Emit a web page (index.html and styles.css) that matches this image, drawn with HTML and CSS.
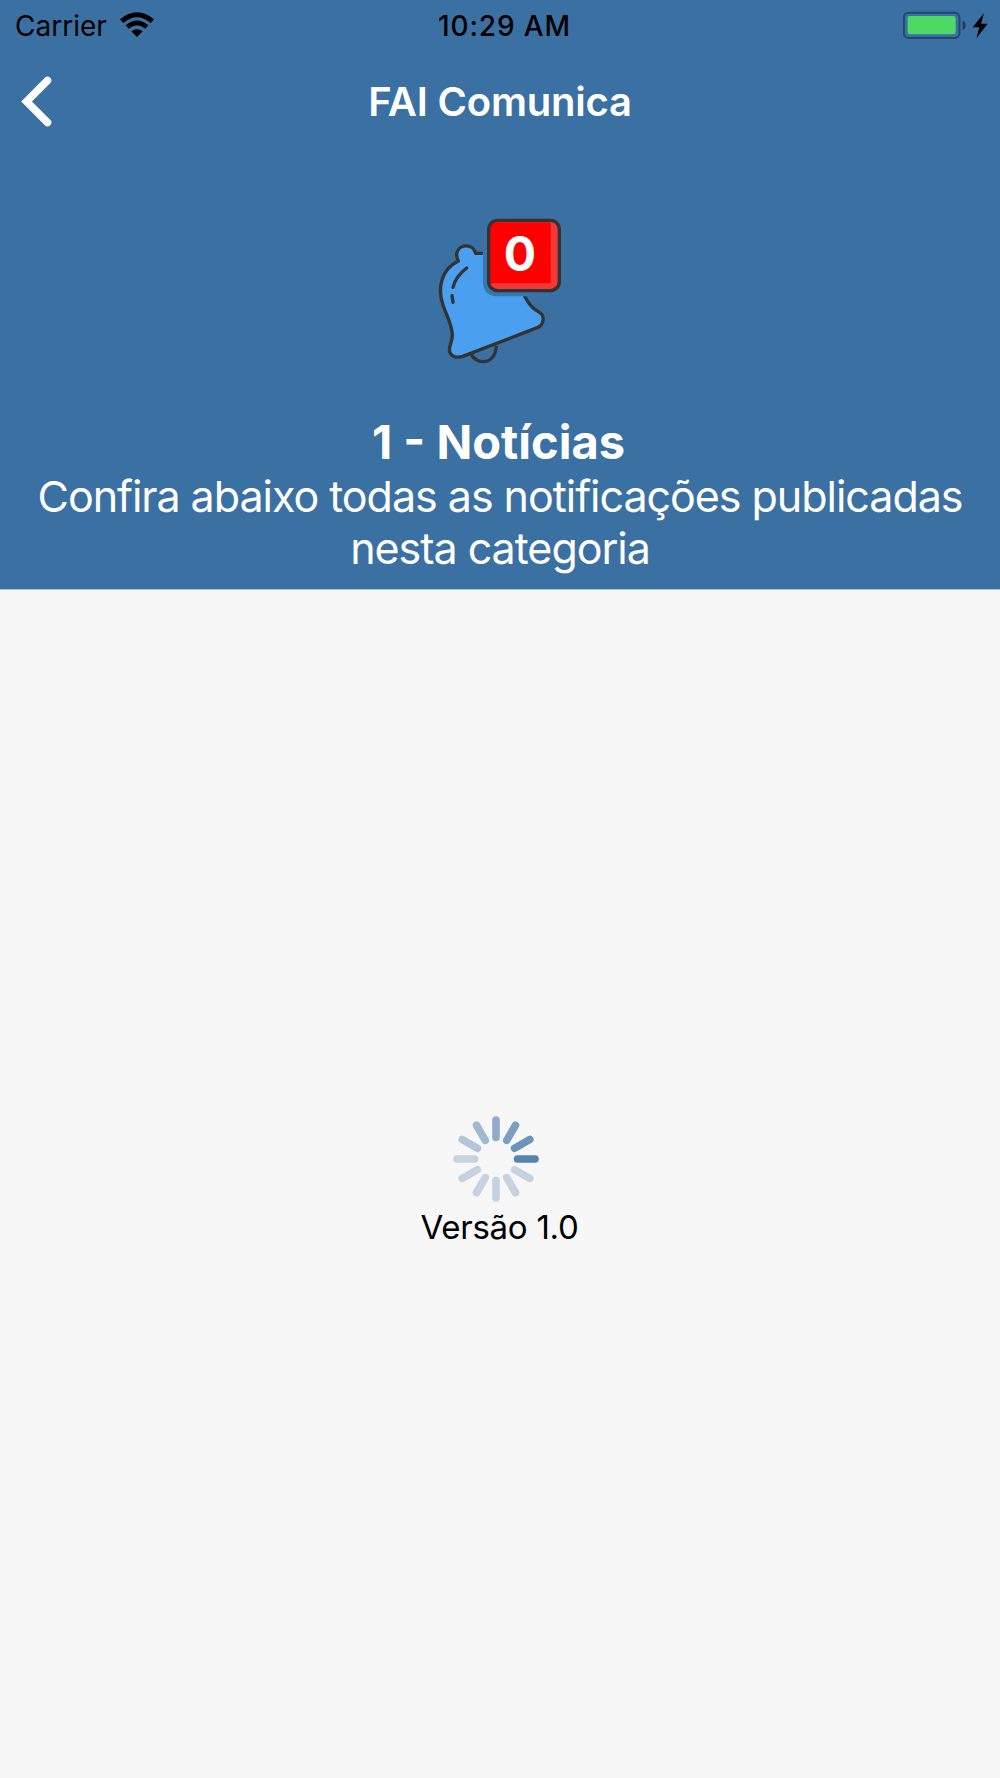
FILE: index.html
```html
<!DOCTYPE html>
<html lang="pt-BR">
  <head>
    <meta charset="UTF-8" />
    <meta name="viewport" content="width=device-width, initial-scale=1.0" />
    <title>FAI Comunica</title>
    <link rel="stylesheet" href="styles.css">
  </head>
  <body>
    <header class="header">
      <div class="status-bar">
        <div class="status-left">
          <span class="carrier">Carrier</span>
          <svg class="wifi" width="34" height="26" viewBox="0 0 102 78">
            <path d="M0 22 Q51 -20 102 22 L92 33 Q51 -2 10 33 Z" />
            <path d="M17 40 Q51 11 85 40 L76 50 Q51 29 26 50 Z" />
            <path d="M34 58 Q51 45 68 58 L51 75 Z" />
          </svg>
        </div>
        <span class="time">10:29 AM</span>
        <div class="status-right">
          <svg width="86" height="30" viewBox="0 0 258 90">
            <rect x="2.5" y="5" width="167" height="76" rx="15" fill="none" stroke="#23476c" stroke-width="6" />
            <rect x="14" y="15" width="144" height="55" rx="7" fill="#4cd964" />
            <path d="M179 29 Q188 33 188 43 Q188 53 179 57 Z" fill="#1d3a58" />
            <path d="M243 6 L209 49 H229 L220 82 L254 38 H234 Z" />
          </svg>
        </div>
      </div>

      <nav class="navbar">
        <a href="#" class="back" aria-label="Voltar">
          <svg width="32" height="52" viewBox="0 0 32 52">
            <path d="M26.5 4.5 L5.5 25.5 L26.5 46.5" />
          </svg>
        </a>
        <h1 class="navbar-title">FAI Comunica</h1>
      </nav>

      <section class="category">
        <!-- Bell with counter -->
        <svg class="bell" width="160" height="180" viewBox="0 0 480 540">
          <path d="M153 460 C166 495 225 498 229 438" fill="none" stroke="#333" stroke-width="10" />
          <path class="bell-body" d="M167 160 C160 131 117 130 110 160 Q109 173 115 183 C65 207 50 264 70 318 C82 352 96 374 97 406 C97 428 83 441 90 458 C95 470 111 475 128 469 L352 383 C372 375 376 347 358 337 C338 327 326 312 315 291 L290 180 H190 V160 Z" />
          <path class="bell-line" d="M186 160 H167 C160 131 117 130 110 160 Q109 173 115 183 C65 207 50 264 70 318 C82 352 96 374 97 406 C97 428 83 441 90 458 C95 470 111 475 128 469 L352 383 C372 375 376 347 358 337 C338 327 326 312 315 291" />
          <path class="bell-line" d="M140 204 Q107 229 99 262 M96 287 L99 307" />
          <path d="M189 150 V245 Q189 289 235 289 H330 L370 260 L220 140 Z" fill="#3777ae" />
          <rect x="206" y="61" width="212" height="211" rx="27" fill="#f33738" />
          <path d="M210 67 H392 V250 H210 Z" fill="#f00" />
          <rect x="206" y="61" width="212" height="211" rx="27" fill="none" stroke="#333" stroke-width="10" />
          <text class="bell-count" x="300" y="212">0</text>
        </svg>
        <h2 class="category-title">1 - Notícias</h2>
        <p class="category-text">Confira abaixo todas as notificações publicadas<br>nesta categoria</p>
      </section>
    </header>

    <main class="loading">
      <svg class="spinner" width="86" height="86" viewBox="-43 -43 86 86">
        <path d="M21.5 0 H39" stroke="#5583b0" />
        <path d="M21.5 0 H39" stroke="#6c94bb" transform="rotate(-30)" />
        <path d="M21.5 0 H39" stroke="#7c9fc1" transform="rotate(-60)" />
        <path d="M21.5 0 H39" stroke="#8eacca" transform="rotate(-90)" />
        <path d="M21.5 0 H39" stroke="#a0b9d1" transform="rotate(-120)" />
        <path d="M21.5 0 H39" stroke="#b2c6da" transform="rotate(-150)" />
        <path d="M21.5 0 H39" transform="rotate(180)" />
        <path d="M21.5 0 H39" transform="rotate(150)" />
        <path d="M21.5 0 H39" transform="rotate(120)" />
        <path d="M21.5 0 H39" transform="rotate(90)" />
        <path d="M21.5 0 H39" transform="rotate(60)" />
        <path d="M21.5 0 H39" transform="rotate(30)" />
      </svg>
      <p class="version">Versão 1.0</p>
    </main>
  </body>
</html>
```
FILE: styles.css
```css
/* General styling */
* {
  box-sizing: border-box;
}

body {
  font-family: Inter, "Liberation Sans", sans-serif;
  margin: 0;
  min-height: 1778px;
  background-color: #f7f7f7;
  color: #000;
}

h1,
h2,
p {
  margin: 0;
}

svg {
  display: block;
}

.header {
  height: 590px;
  background: #3b70a3;
  border-bottom: 1px solid #adc0dc;
  color: white;
}

/* Status bar */
.status-bar {
  display: grid;
  grid-template-columns: 1fr auto 1fr;
  align-items: center;
  height: 50px;
  padding: 0 11px 0 15px;
  color: #000;
  font-size: 28px;
  line-height: 50px;
}

.status-left {
  display: flex;
  align-items: center;
  gap: 13px;
}

.carrier {
  padding-top: 1px;
}

.wifi {
  margin-top: -1px;
}

.time {
  padding: 1px 0 0 5px;
  font-weight: 500;
  letter-spacing: 0.9px;
}

.status-right {
  display: flex;
  justify-content: flex-end;
}

/* Navigation */
.navbar {
  display: grid;
  grid-template-columns: 100px 1fr 100px;
  align-items: center;
  height: 104px;
}

.back {
  padding-left: 21px;
}

.back path {
  fill: none;
  stroke: white;
  stroke-width: 7.5;
  stroke-linecap: round;
}

.navbar-title {
  font-size: 40px;
  font-weight: 600;
  line-height: 52px;
  letter-spacing: -0.2px;
  text-align: center;
}

/* Category */
.category {
  display: flex;
  flex-direction: column;
  align-items: center;
  padding-top: 46px;
  text-align: center;
}

.bell-body {
  fill: #4a9fee;
}

.bell-line {
  fill: none;
  stroke: #333;
  stroke-width: 10;
  stroke-linecap: round;
  stroke-linejoin: round;
}

.bell-count {
  fill: white;
  font-size: 144px;
  font-weight: 700;
  text-anchor: middle;
}

.category-title {
  margin-top: 34px;
  padding-right: 3px;
  font-size: 47px;
  font-weight: 700;
  line-height: 56px;
}

.category-text {
  font-size: 43px;
  line-height: 52px;
  letter-spacing: -1.03px;
  white-space: nowrap;
}

/* Loading */
.loading {
  display: flex;
  flex-direction: column;
  align-items: center;
  padding-top: 526px;
}

.spinner {
  margin-right: 8px;
  stroke: #c5d2e0;
  stroke-width: 7.6;
  stroke-linecap: round;
}

.version {
  margin-top: 5px;
  padding-right: 1px;
  font-size: 33px;
  line-height: 40px;
  letter-spacing: -0.25px;
}
```
